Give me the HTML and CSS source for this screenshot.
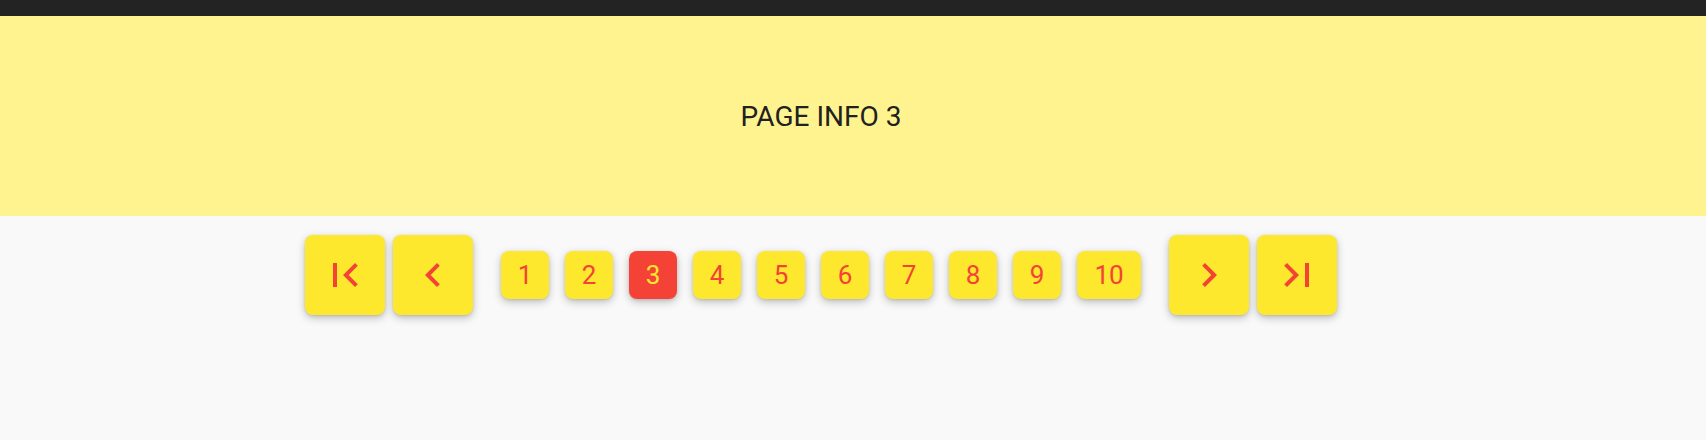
FILE: index.html
```html
<!DOCTYPE html>
<html lang="en">
<head>
<meta charset="utf-8">
<title>Pagination</title>
<link rel="stylesheet" href="styles.css">
</head>
<body>
<div class="topbar"></div>
<header class="info"><span class="info-text">PAGE INFO 3</span></header>
<nav class="pager">
  <div class="edge">
    <button class="big" aria-label="First page">
      <svg viewBox="0 0 24 24" width="48" height="48"><path d="M18.41 16.59L13.82 12l4.59-4.59L17 6l-6 6 6 6zM6 6h2v12H6z"/></svg>
    </button>
    <button class="big" aria-label="Previous page">
      <svg viewBox="0 0 24 24" width="48" height="48"><path d="M15.41 7.41L14 6l-6 6 6 6 1.41-1.41L10.83 12z"/></svg>
    </button>
  </div>
  <div class="nums">
    <button class="num">1</button>
    <button class="num">2</button>
    <button class="num active">3</button>
    <button class="num">4</button>
    <button class="num">5</button>
    <button class="num">6</button>
    <button class="num">7</button>
    <button class="num">8</button>
    <button class="num">9</button>
    <button class="num wide">10</button>
  </div>
  <div class="edge">
    <button class="big" aria-label="Next page">
      <svg viewBox="0 0 24 24" width="48" height="48"><path d="M10 6L8.59 7.41 13.17 12l-4.58 4.59L10 18l6-6z"/></svg>
    </button>
    <button class="big" aria-label="Last page">
      <svg viewBox="0 0 24 24" width="48" height="48"><path d="M5.59 7.41L10.18 12l-4.59 4.59L7 18l6-6-6-6zM16 6h2v12h-2z"/></svg>
    </button>
  </div>
</nav>
</body>
</html>
```

FILE: styles.css
```css
html, body {
  margin: 0;
  padding: 0;
  background: #f9f9fa;
  font-family: Roboto, "Liberation Sans", sans-serif;
}

.topbar {
  height: 16px;
  background: #232323;
}

.info {
  height: 200px;
  background: #fff38f;
  display: flex;
  align-items: center;
  justify-content: center;
  padding-right: 64px;
  font-size: 28px;
  color: #212121;
}

.pager {
  display: flex;
  justify-content: center;
  align-items: center;
  gap: 28px;
  margin-top: 19px;
  padding-right: 64px;
  padding-bottom: 12px;
}

.edge {
  display: flex;
  gap: 8px;
}

.nums {
  display: flex;
  gap: 16px;
}

button {
  border: none;
  padding: 0;
  margin: 0;
  font-family: inherit;
  background: #fde82e;
  color: #f44336;
  display: flex;
  align-items: center;
  justify-content: center;
  cursor: pointer;
}

.big {
  width: 80px;
  height: 80px;
  border-radius: 8px;
  box-shadow: 0 3px 8px rgba(0, 0, 0, 0.24), 0 1px 3px rgba(0, 0, 0, 0.1);
}

.big svg {
  fill: #f44336;
  display: block;
}

.num {
  width: 48px;
  height: 48px;
  border-radius: 8px;
  font-size: 26px;
  box-shadow: 0 3px 8px rgba(0, 0, 0, 0.24), 0 1px 3px rgba(0, 0, 0, 0.1);
}

.num.wide {
  width: 64px;
}

.num.active {
  background: #f44336;
  color: #fde82e;
}
```
